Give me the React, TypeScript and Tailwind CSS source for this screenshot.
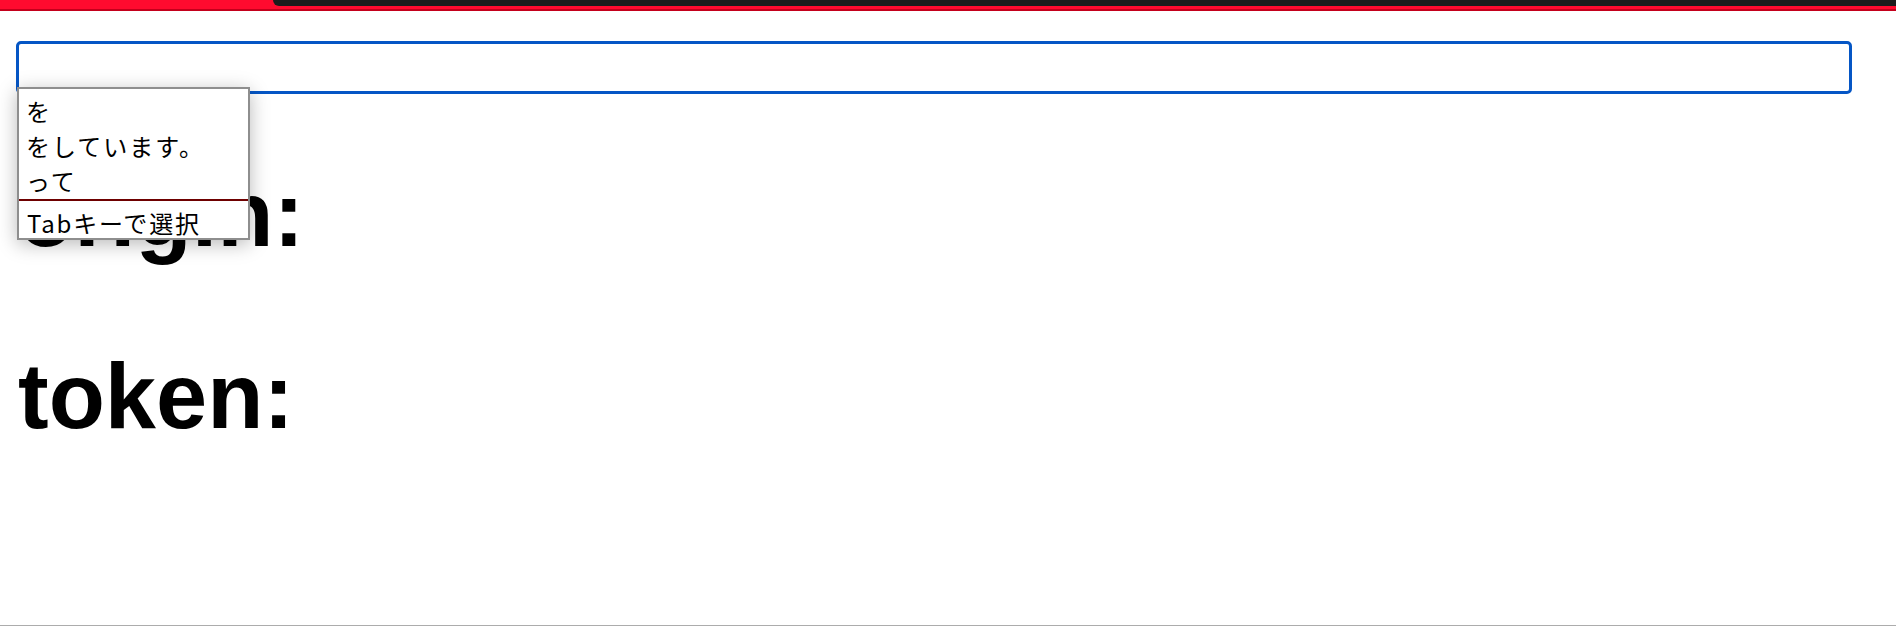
import { useState } from "react";

const suggestions = ["を", "をしています。", "って"];

function TopBar() {
   return (
      <div className="flex h-[11px] flex-col bg-[#ff0b2f]">
         <div className="flex h-[6px]">
            <div className="w-[273px]" />
            <div className="flex-1 rounded-bl-[9px] bg-[#1c1c1c]" />
         </div>
         <div className="h-[3px]" />
         <div className="h-[2px] bg-[#c4001c]" />
      </div>
   );
}

function Suggestions() {
   return (
      <div className="absolute left-[1px] top-[46px] z-10 w-[233px] border-2 border-[#8e8e8e] bg-white pt-[4px] shadow-[0_4px_18px_rgba(0,0,0,0.28)] [font-family:'Noto_Sans_CJK_JP',sans-serif]">
         {suggestions.map((item) => (
            <div key={item} className="h-[35px] pl-[7px] text-[24px] leading-[35px] tracking-[2px] text-black">
               {item}
            </div>
         ))}
         <div className="mt-[1px] h-[2px] bg-[#6e0000]" />
         <div className="h-[37px] pl-[8px] pt-[6px] text-[24px] leading-[31px] tracking-[1.8px] text-black">Tabキーで選択</div>
      </div>
   );
}

export default function App() {
   const [value, setValue] = useState("");

   return (
      <div className="h-[626px] overflow-hidden border-b border-[#acacac] bg-white">
         <TopBar />
         <div className="relative ml-4 mt-[30px] w-[1836px]">
            <input
               value={value}
               onChange={(e) => setValue(e.target.value)}
               className="block h-[53px] w-full rounded-[5px] border-[3px] border-[#0556c5] bg-white outline-none"
            />
            <Suggestions />
         </div>
         <div className="pl-[18px] [font-family:'Liberation_Sans',Arial,sans-serif] text-[92px] font-bold leading-[92px] text-black">
            <h1 className="mt-[74px]">origin:</h1>
            <h1 className="mt-[90px]">token:</h1>
         </div>
      </div>
   );
}
